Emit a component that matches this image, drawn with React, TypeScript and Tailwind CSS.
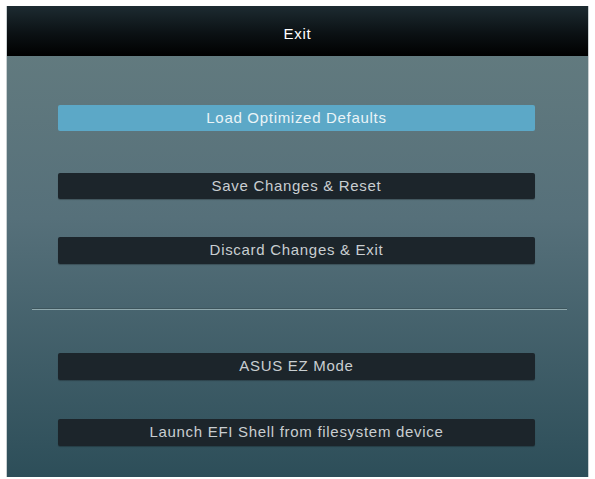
import React from "react";

const font = { fontFamily: '"Liberation Sans", Arial, sans-serif' };

function Btn({ label, active, className }: { label: string; active?: boolean; className?: string }) {
  return (
    <div
      className={
        "ml-[51px] w-[477px] flex items-center justify-center rounded-[2px] text-[15px] tracking-[0.7px] " +
        (active
          ? "bg-[#5ca8c7] text-[#eaf4f7] "
          : "bg-[#1c252b] text-[#c9ced1] shadow-[0_1px_1px_rgba(0,0,0,0.25)] ") +
        (className ?? "")
      }
    >
      {label}
    </div>
  );
}

export default function App() {
  return (
    <div className="w-[595px] h-[479px] bg-white pt-[6px] pl-[6px]" style={font}>
      <div className="w-[583px] h-[471px] flex flex-col border-l border-r border-[#c9d0d2] bg-[linear-gradient(to_bottom,#657d80_0%,#56707a_45%,#2d4e59_100%)]">
        <div className="h-[50px] shrink-0 flex items-center justify-center pt-[6px] bg-[linear-gradient(to_bottom,#1d2b31_0%,#0b1114_55%,#000000_100%)] text-white text-[15px] tracking-[0.7px]">
          Exit
        </div>
        <Btn label="Load Optimized Defaults" active className="mt-[49px] h-[26px]" />
        <Btn label="Save Changes & Reset" className="mt-[42px] h-[26px]" />
        <Btn label="Discard Changes & Exit" className="mt-[38px] h-[27px]" />
        <div className="ml-[25px] w-[535px] mt-[44px] flex flex-col">
          <div className="h-px bg-[#3d555c]" />
          <div className="h-px bg-[#8fa9ae]" />
        </div>
        <Btn label="ASUS EZ Mode" className="mt-[43px] h-[27px]" />
        <Btn label="Launch EFI Shell from filesystem device" className="mt-[39px] h-[27px]" />
      </div>
    </div>
  );
}
